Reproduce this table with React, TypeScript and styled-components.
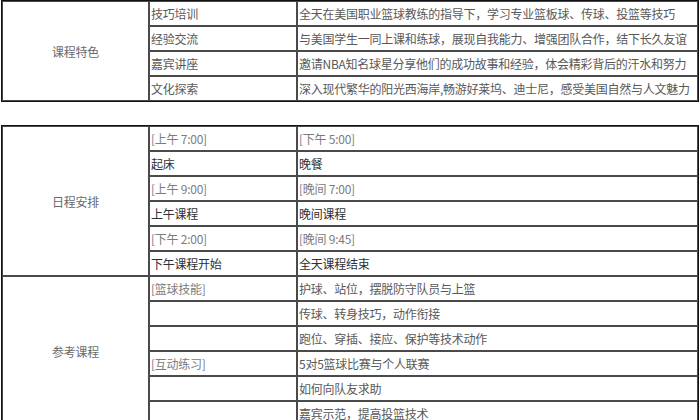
import styled, { createGlobalStyle } from 'styled-components';

type Tone = 'muted' | 'normal' | 'strong';

interface Cell {
  text: string;
  tone?: Tone;
}

interface Section {
  label: string;
  rows: [Cell, Cell][];
}

const features: Section = {
  label: '课程特色',
  rows: [
    [{ text: '技巧培训' }, { text: '全天在美国职业篮球教练的指导下，学习专业篮板球、传球、投篮等技巧' }],
    [{ text: '经验交流' }, { text: '与美国学生一同上课和练球，展现自我能力、增强团队合作，结下长久友谊' }],
    [{ text: '嘉宾讲座' }, { text: '邀请NBA知名球星分享他们的成功故事和经验，体会精彩背后的汗水和努力' }],
    [{ text: '文化探索' }, { text: '深入现代繁华的阳光西海岸,畅游好莱坞、迪士尼，感受美国自然与人文魅力' }],
  ],
};

const schedule: Section = {
  label: '日程安排',
  rows: [
    [{ text: '[上午 7:00]', tone: 'muted' }, { text: '[下午 5:00]', tone: 'muted' }],
    [{ text: '起床', tone: 'strong' }, { text: '晚餐', tone: 'strong' }],
    [{ text: '[上午 9:00]', tone: 'muted' }, { text: '[晚间 7:00]', tone: 'muted' }],
    [{ text: '上午课程', tone: 'strong' }, { text: '晚间课程', tone: 'strong' }],
    [{ text: '[下午 2:00]', tone: 'muted' }, { text: '[晚间 9:45]', tone: 'muted' }],
    [{ text: '下午课程开始', tone: 'strong' }, { text: '全天课程结束', tone: 'strong' }],
  ],
};

const courses: Section = {
  label: '参考课程',
  rows: [
    [{ text: '[篮球技能]', tone: 'muted' }, { text: '护球、站位，摆脱防守队员与上篮' }],
    [{ text: '' }, { text: '传球、转身技巧，动作衔接' }],
    [{ text: '' }, { text: '跑位、穿插、接应、保护等技术动作' }],
    [{ text: '[互动练习]', tone: 'muted' }, { text: '5对5篮球比赛与个人联赛' }],
    [{ text: '' }, { text: '如何向队友求助' }],
    [{ text: '' }, { text: '嘉宾示范，提高投篮技术' }],
  ],
};

const toneColor: Record<Tone, string> = {
  muted: '#7c7c7c',
  normal: '#585858',
  strong: '#303030',
};

const Columns = () => (
  <colgroup>
    <LabelCol />
    <NameCol />
    <col />
  </colgroup>
);

const SectionRows = ({ section }: { section: Section }) => (
  <tbody>
    {section.rows.map(([left, right], i) => (
      <tr key={i}>
        {i === 0 && <LabelCell rowSpan={section.rows.length}>{section.label}</LabelCell>}
        <TextCell $tone={left.tone ?? 'normal'}>{left.text}</TextCell>
        <TextCell $tone={right.tone ?? 'normal'}>{right.text}</TextCell>
      </tr>
    ))}
  </tbody>
);

export default function App() {
  return (
    <>
      <GlobalStyle />
      <Page>
        <Table>
          <Columns />
          <SectionRows section={features} />
        </Table>
        <Table>
          <Columns />
          <SectionRows section={schedule} />
          <SectionRows section={courses} />
        </Table>
      </Page>
    </>
  );
}

const GlobalStyle = createGlobalStyle`
  body {
    margin: 0;
    background: #ffffff;
    font-family: "Noto Sans CJK SC", "Noto Sans", sans-serif;
  }
`;

const Page = styled.div`
  display: flex;
  flex-direction: column;
  gap: 23px;
  padding: 0 1px;
`;

const Table = styled.table`
  width: 698px;
  table-layout: fixed;
  border-collapse: separate;
  border-spacing: 0;
  border: 1px solid #111111;
`;

const LabelCol = styled.col`
  width: 147px;
`;

const NameCol = styled.col`
  width: 148px;
`;

const BaseCell = styled.td`
  height: 23px;
  padding: 0 1px;
  border: 1px solid #4a4a4a;
  font-size: 12px;
  line-height: 23px;
  letter-spacing: -0.25px;
  white-space: nowrap;
  overflow: hidden;
`;

const LabelCell = styled(BaseCell)`
  text-align: center;
  vertical-align: middle;
  color: #6a6a6a;
`;

const TextCell = styled(BaseCell)<{ $tone: Tone }>`
  text-align: left;
  color: ${(p) => toneColor[p.$tone]};
`;
